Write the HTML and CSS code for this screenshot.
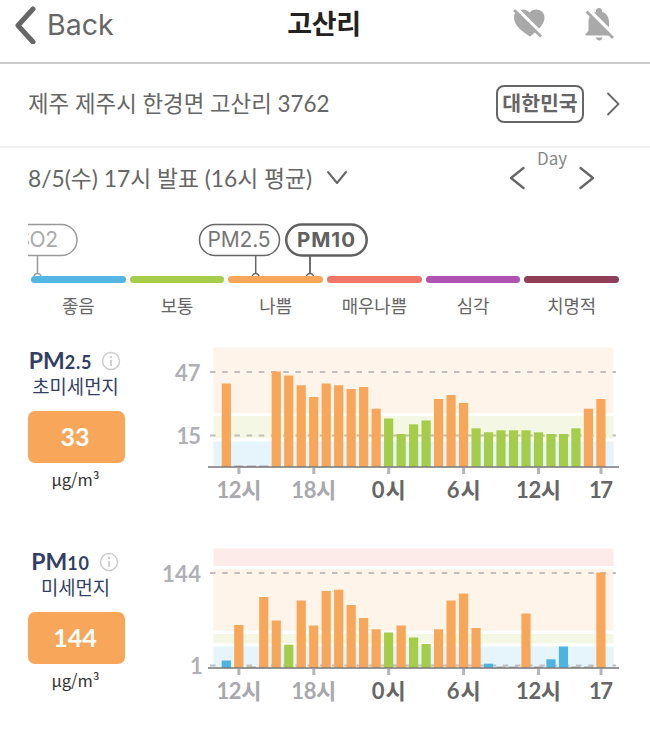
FILE: index.html
```html
<!DOCTYPE html>
<html lang="ko">
<head>
  <meta charset="UTF-8">
  <meta name="viewport" content="width=device-width, initial-scale=1.0">
  <title>고산리</title>
  <link rel="stylesheet" href="styles.css">
</head>
<body>
  <header class="topbar">
    <a class="back">
      <svg width="24" height="38" viewBox="0 0 24 38"><path d="M20 3 5 19.500 20 36" fill="none" stroke="#666" stroke-width="5" stroke-linecap="round" stroke-linejoin="round"/></svg>
      <span>Back</span>
    </a>
    <h1>고산리</h1>
    <div class="actions">
      <svg width="34" height="32" viewBox="0 0 34 32">
        <path d="M18 28.500C11 24 2 18 2 9.500 2 1 13-1 17.500 4.500 22-1 32.500 1 32.500 9.500 32.500 17 25 23 18 28.500Z" fill="#a9a9a9"/>
        <path d="M3 -1 32 28" stroke="#fff" stroke-width="3.500"/>
        <path d="M2 2 29 28.500" stroke="#a9a9a9" stroke-width="2.800"/>
      </svg>
      <svg width="32" height="36" viewBox="0 0 32 36">
        <path d="M2.500 29.500v-1.500l3-3v-9c0-5 3-9 7.500-10V5a3 3 0 0 1 6 0v1c4.500 1 7 5 7 10v13.500Z" fill="#a9a9a9"/>
        <path d="M13 31.500h6.500c-.500 4-6 4-6.500 0Z" fill="#a9a9a9"/>
        <path d="M4 2 34 32" stroke="#fff" stroke-width="3.500"/>
        <path d="M3.500 5.500 30 32" stroke="#a9a9a9" stroke-width="2.800"/>
      </svg>
    </div>
  </header>

  <section class="address">
    <span class="place">제주 제주시 한경면 고산리 3762</span>
    <span class="country">대한민국</span>
    <svg width="14" height="26" viewBox="0 0 14 26"><path d="M1.500 2 12.500 13 1.500 24" fill="none" stroke="#666" stroke-width="1.800"/></svg>
  </section>

  <section class="report">
    <span class="time">8/5(수) 17시 발표 (16시 평균)</span>
    <svg class="down" width="22" height="16" viewBox="0 0 22 16"><path d="M2 2 11 13 20 2" fill="none" stroke="#666" stroke-width="2" stroke-linecap="round" stroke-linejoin="round"/></svg>
    <div class="day">
      <svg width="16" height="24" viewBox="0 0 16 24"><path d="M14.500 2 2 12l12.500 10" fill="none" stroke="#666" stroke-width="2.300" stroke-linecap="round" stroke-linejoin="round"/></svg>
      <span>Day</span>
      <svg width="16" height="24" viewBox="0 0 16 24"><path d="M1.500 2 14 12 1.500 22" fill="none" stroke="#666" stroke-width="2.300" stroke-linecap="round" stroke-linejoin="round"/></svg>
    </div>
  </section>

  <!-- Grade scale with the pollutant markers -->
  <section class="scale">
    <svg class="markers" width="591" height="60" viewBox="0 0 591 60">
      <g fill="#fff" stroke="#999" stroke-width="1.500">
        <rect x="-31" y="4.500" width="80" height="31" rx="15.500"/>
        <path d="M9.500 36v17"/>
        <circle cx="9.500" cy="57" r="3.500"/>
      </g>
      <g fill="#fff" stroke="#666" stroke-width="1.500">
        <rect x="171.500" y="4.500" width="80" height="31" rx="15.500"/>
        <path d="M227.700 36v17"/>
        <circle cx="227.700" cy="57" r="3.500"/>
      </g>
      <g fill="#fff" stroke="#606060">
        <rect x="258.200" y="4.500" width="80.500" height="31" rx="15.500" stroke-width="2.500"/>
        <path d="M282 36v17" stroke-width="1.800"/>
        <circle cx="282" cy="57" r="3.500" stroke-width="1.500"/>
      </g>
      <text class="pill-text faded" x="-11.500" y="27" textLength="41.500">SO2</text>
      <text class="pill-text" x="179.500" y="27" textLength="63">PM2.5</text>
      <text class="pill-text strong" x="269" y="27" textLength="58">PM10</text>
    </svg>
    <ul class="grades">
      <li class="good">좋음</li>
      <li class="normal">보통</li>
      <li class="bad">나쁨</li>
      <li class="worse">매우나쁨</li>
      <li class="serious">심각</li>
      <li class="fatal">치명적</li>
    </ul>
  </section>

  <section class="pollutant">
    <div class="summary">
      <h2>PM<small>2.5</small>
        <svg width="20" height="20" viewBox="0 0 20 20"><circle cx="10" cy="10" r="8.500" fill="none" stroke="#ccc" stroke-width="1.500"/><path d="M10 9v6M10 5v2" stroke="#ccc" stroke-width="1.800"/></svg>
      </h2>
      <p class="name">초미세먼지</p>
      <div class="value">33</div>
      <p class="unit">μg/m³</p>
    </div>
    <svg class="chart" width="480" height="170" viewBox="0 0 480 170">
      <rect class="band-bad" x="63.500" y="7.500" width="400" height="65.500"/>
      <rect class="band-normal" x="63.500" y="76" width="400" height="22"/>
      <rect class="band-good" x="63.500" y="101.500" width="400" height="24"/>
      <path class="guide" d="M60 32H466M60 95.500H466"/>
      <g id="pm25Bars"></g>
      <text class="limit" x="25" y="40.500" textLength="25.500">47</text>
      <text class="limit" x="26.500" y="104" textLength="24.500">15</text>
    </svg>
  </section>

  <section class="pollutant">
    <div class="summary">
      <h2>PM<small>10</small>
        <svg width="20" height="20" viewBox="0 0 20 20"><circle cx="10" cy="10" r="8.500" fill="none" stroke="#ccc" stroke-width="1.500"/><path d="M10 9v6M10 5v2" stroke="#ccc" stroke-width="1.800"/></svg>
      </h2>
      <p class="name">미세먼지</p>
      <div class="value">144</div>
      <p class="unit">μg/m³</p>
    </div>
    <svg class="chart" width="480" height="170" viewBox="0 0 480 170">
      <rect class="band-worse" x="63.500" y="7.500" width="400" height="17.500"/>
      <rect class="band-bad" x="63.500" y="28" width="400" height="61.500"/>
      <rect class="band-normal" x="63.500" y="93" width="400" height="9"/>
      <rect class="band-good" x="63.500" y="105.500" width="400" height="21"/>
      <path class="guide" d="M60 32H466M60 124.500H466"/>
      <g id="pm10Bars"></g>
      <text class="limit" x="12" y="40.500" textLength="39">144</text>
      <text class="limit" x="40" y="133">1</text>
    </svg>
  </section>

  <script src="chart.js"></script>
</body>
</html>
```

FILE: styles.css
```css
* {
  box-sizing: border-box;
}
body {
  margin: 0;
  background: #fff;
  color: #666;
  font-family: Lato, "Noto Sans CJK KR", sans-serif;
}
h1, h2, p, ul {
  margin: 0;
  padding: 0;
}
svg {
  display: block;
  flex: none;
}
.topbar {
  display: grid;
  grid-template-columns: 1fr auto 1fr;
  height: 64px;
  padding: 0 35px 14px 13px;
  align-items: center;
  border-bottom: 2px solid #ccc;
}
.back {
  display: flex;
  align-items: center;
  gap: 10px;
  padding-top: 1px;
  font: 28.5px Inter, sans-serif;
  font-weight: 400;
}
.topbar h1 {
  color: #222;
  font-size: 27px;
  line-height: 46px;
  padding-left: 20px;
  letter-spacing: -0.3px;
}
.actions {
  display: flex;
  align-items: center;
  justify-content: flex-end;
  gap: 37px;
}
.address {
  display: flex;
  align-items: center;
  height: 84px;
  padding: 0 30px 2px 28px;
  border-bottom: 2px solid #f0f0f0;
}
.place {
  flex: 1;
  padding-bottom: 4px;
  font-size: 22.4px;
  white-space: nowrap;
}
.country {
  width: 88px;
  height: 38px;
  margin-right: 22px;
  border: 2px solid #666;
  border-radius: 8px;
  font-size: 20.5px;
  font-weight: bold;
  line-height: 32px;
  text-align: center;
}
.report {
  display: flex;
  align-items: center;
  height: 72px;
  padding: 0 55px 12px 28px;
}
.time {
  padding-bottom: 2px;
  font-size: 22.8px;
  white-space: nowrap;
}
.down {
  margin-left: 14px;
}
.day {
  display: flex;
  align-items: center;
  margin-left: auto;
}
.day span {
  width: 54px;
  padding-bottom: 40px;
  font: 17px/20px "Noto Sans CJK KR", sans-serif;
  color: #888;
  text-align: center;
}
.scale {
  height: 120px;
  padding: 0 31px 0 28px;
}
.markers {
  overflow: hidden;
}
.pill-text {
  font: 21px Inter, sans-serif;
  fill: #777;
}
.pill-text.faded {
  fill: #aaa;
}
.pill-text.strong {
  font-size: 20.5px;
  font-weight: bold;
  fill: #606060;
}
.grades {
  display: flex;
  gap: 4px;
  margin-top: -4px;
  padding-left: 3px;
  list-style: none;
  position: relative;
}
.grades li {
  flex: 1;
  font-size: 17.8px;
  line-height: 26px;
  text-align: center;
}
.grades li::before {
  content: "";
  display: block;
  height: 7px;
  margin-bottom: 10px;
  border-radius: 4px;
}
.good::before {
  background: #55b6e3;
}
.normal::before {
  background: #a6cd49;
}
.bad::before {
  background: #f8a65a;
}
.worse::before {
  background: #f07767;
}
.serious::before {
  background: #af52b1;
}
.fatal::before {
  background: #913e59;
}
.pollutant {
  display: flex;
  height: 201px;
  padding-left: 28px;
}
.summary {
  width: 97px;
  margin-right: 25px;
  padding-top: 7px;
  text-align: center;
}
.summary h2 {
  display: flex;
  justify-content: center;
  align-items: baseline;
  height: 27px;
  margin-left: -3px;
  color: #333e66;
  font-size: 23px;
  line-height: 27px;
}
.summary h2 small {
  font-size: 18px;
  letter-spacing: 0.8px;
}
.summary h2 svg {
  margin-left: 9px;
  align-self: center;
}
.name {
  margin-left: -2px;
  color: #333e66;
  font-size: 18.8px;
  line-height: 26px;
}
.value {
  height: 52px;
  margin-top: 11px;
  border-radius: 7px;
  background: #f8a65a;
  color: #fff;
  font-size: 25px;
  font-weight: bold;
  line-height: 50px;
  padding-right: 3px;
}
.unit {
  padding-right: 2px;
  color: #333;
  font: 16.5px/33px "Noto Sans CJK KR", sans-serif;
}
.band-worse {
  fill: #fcebe8;
}
.band-bad {
  fill: #fef4e9;
}
.band-normal {
  fill: #f3f7e3;
}
.band-good {
  fill: #e6f4fc;
}
.guide {
  stroke: #c4bdbd;
  stroke-width: 1.8;
  stroke-dasharray: 5.500 6.700;
}
.bar-good {
  fill: #4fb3e1;
}
.bar-normal {
  fill: #a6cd49;
}
.bar-bad {
  fill: #f8a65a;
}
.bar-none {
  fill: #aaa;
}
.axis {
  stroke: #777;
  stroke-width: 1.7;
}
.tick {
  stroke: #b5b5b5;
  stroke-width: 3;
}
.limit, .hour {
  font-size: 22px;
  font-weight: bold;
  fill: #b0b0b6;
}
.hour {
  fill: #666;
  text-anchor: middle;
}
.hour.yesterday {
  fill: #a8a8ad;
}
```

FILE: chart.js
```js
// [grade, bar height]
const pm25 = [
  ['bad', 83.5], ['none', 1.5], ['none', 1.5], ['none', 1.5], ['bad', 95.5], ['bad', 91.5],
  ['bad', 81.7], ['bad', 70], ['bad', 83.5], ['bad', 81.7], ['bad', 78], ['bad', 80],
  ['bad', 58.3], ['normal', 48.5], ['normal', 33], ['normal', 42.7], ['normal', 46.5], ['bad', 68],
  ['bad', 72], ['bad', 64], ['normal', 38.7], ['normal', 34.7], ['normal', 36.7], ['normal', 36.7],
  ['normal', 36.7], ['normal', 34.7], ['normal', 33], ['normal', 33], ['normal', 38.7], ['bad', 58.3],
  ['bad', 68]
];
const pm10 = [
  ['good', 7.5], ['bad', 43], ['none', 1.5], ['bad', 71], ['bad', 47.5], ['normal', 23.3],
  ['bad', 67.5], ['bad', 42.5], ['bad', 77], ['bad', 78.3], ['bad', 63], ['bad', 50],
  ['bad', 38.7], ['normal', 35.5], ['bad', 42.5], ['normal', 30.5], ['normal', 24], ['bad', 38.7],
  ['bad', 67.5], ['bad', 74.5], ['bad', 40], ['good', 4.3], ['none', 1.5], ['none', 1.5],
  ['bad', 54.5], ['none', 1.5], ['good', 8.7], ['good', 21.5], ['none', 1.5], ['none', 1.5],
  ['bad', 95.5]
];
const hours = [[1, '12시', 45], [7, '18시', 45], [13, '0시', 34], [19, '6시', 34], [25, '12시', 45], [30, '17', 24]];
const baseline = 127;

function drawBars(id, data) {
  let html = '';
  data.forEach(([grade, height], i) => {
    html += `<rect class="bar-${grade}" x="${71.7 + i * 12.487}" y="${baseline - height}" width="9.2" height="${height}"/>`;
  });
  html += `<path class="axis" d="M58 ${baseline}H469"/>`;
  hours.forEach(([i, label, width]) => {
    const x = 76.4 + i * 12.487;
    html += `<path class="tick" d="M${x} 128V134"/>`;
    html += `<text class="hour ${i < 13 ? 'yesterday' : ''}" x="${x}" y="158" textLength="${width}">${label}</text>`;
  });
  document.getElementById(id).innerHTML = html;
}

drawBars('pm25Bars', pm25);
drawBars('pm10Bars', pm10);
```
